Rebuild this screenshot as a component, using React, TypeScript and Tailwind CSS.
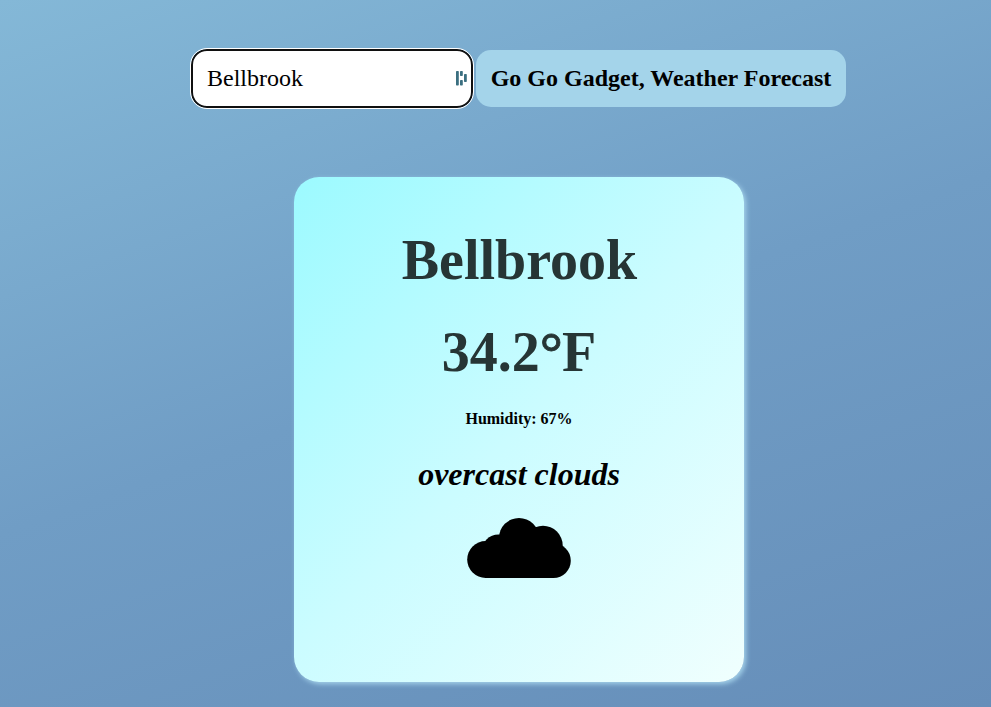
export default function App() {
  return (
    <div className="flex h-[707px] w-[991px] flex-col overflow-hidden bg-[linear-gradient(160deg,#84b8d7_0%,#709dc5_50%,#668eb9_100%)] font-['Liberation_Serif','Times_New_Roman',serif] text-black">
      <form className="ml-[191px] mt-[49px] flex items-center gap-[3px]">
        <div className="flex h-[59px] w-[282px] items-center justify-between rounded-[16px] border-2 border-[#101010] bg-white pl-[14px] pr-1 text-[24px] outline outline-1 outline-white">
          <span className="-mt-0.5">Bellbrook</span>
          <svg width="11" height="15" viewBox="0 0 11 15" fill="#3b6f80">
            <rect x="0" y="0" width="2.8" height="14.5" rx="0.7" />
            <rect x="4" y="0" width="2.8" height="5" rx="0.7" />
            <rect x="4" y="9" width="2.8" height="5.5" rx="0.7" />
            <rect x="8" y="3" width="2.8" height="8" rx="0.7" />
          </svg>
        </div>
        <button type="button" className="h-[57px] w-[370px] rounded-[15px] bg-[#a4d4ea] pb-0.5 text-[24px] font-bold">Go Go Gadget, Weather Forecast</button>
      </form>
      <main className="ml-[294px] mt-[69px] flex h-[505px] w-[450px] flex-col items-center rounded-[25px] bg-[linear-gradient(135deg,#9cfaff_0%,#cbfcff_50%,#f0fffe_100%)] shadow-[2px_2px_5px_#a5d3eb]">
        <h1 className="mt-[51px] pl-px text-[56px] font-bold leading-[64px] text-[#263535]">Bellbrook</h1>
        <h2 className="mt-[28px] text-[56px] font-bold leading-[64px] text-[#263535]">
          34.2<span className="inline-block origin-[50%_37%] scale-[1.03] [-webkit-text-stroke:0.8px_#263535]">°</span>F
        </h2>
        <p className="mt-[26px] text-[16px] font-bold leading-[18px]">Humidity: 67%</p>
        <p className="mt-[28px] text-[32px] font-bold italic leading-[36px]">overcast clouds</p>
        <svg className="mt-[25px]" width="104" height="62" viewBox="0 0 104 62">
          <circle cx="18.7" cy="42.5" r="18.5" />
          <circle cx="31.5" cy="34.5" r="17" />
          <circle cx="52" cy="21" r="20" />
          <circle cx="76" cy="28.5" r="19.7" />
          <circle cx="86.5" cy="43.7" r="17.3" />
          <rect x="18" y="27" width="69" height="34" />
        </svg>
      </main>
    </div>
  );
}
